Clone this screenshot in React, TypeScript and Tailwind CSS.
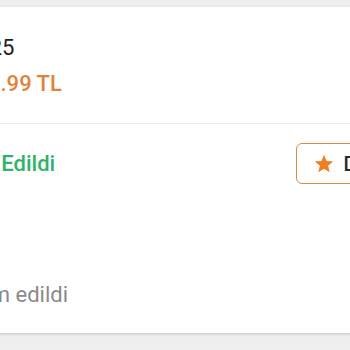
export default function App() {
  return (
    <div className="h-[350px] w-[350px] overflow-hidden bg-[#efefef] pt-[7px] font-['Roboto',sans-serif]">
      <div className="-ml-[100px] w-[620px] bg-white shadow-[0_1px_3px_rgba(0,0,0,0.18)]">
        {/* order summary */}
        <div className="pl-[100px] pt-[25px] pb-[23px]">
          <div className="-ml-[35px] whitespace-nowrap text-[22px] leading-[32px] text-[#212121]">
            2025
          </div>
          <div className="mt-[4px] -ml-[37px] whitespace-nowrap text-[22px] leading-[32px] font-medium text-[#e0823a]">
            149.99 TL
          </div>
        </div>

        <div className="border-t border-[#ececec]" />

        {/* status row */}
        <div className="flex items-center pl-[100px] pt-[19px]">
          <div className="w-[296px] shrink-0">
            <div className="-ml-[70px] whitespace-nowrap text-[22px] leading-[32px] font-medium text-[#2fb36a]">
              Teslim Edildi
            </div>
          </div>
          <button className="flex h-[41px] items-center gap-[9px] rounded-[6px] border-[1.5px] border-[#d98c47] pl-[15.5px] pr-[16px] text-[20px] font-medium text-[#2a2a2a]">
            <svg width="22" height="22" viewBox="0 0 24 24" fill="#f07f22">
              <path d="M12 17.27L18.18 21l-1.64-7.03L22 9.24l-7.19-.61L12 2 9.19 8.63 2 9.24l5.46 4.73L5.82 21z" />
            </svg>
            Değerlendir
          </button>
        </div>

        <div className="pl-[100px] pt-[95px] pb-[22px]">
          <div className="-ml-[55px] whitespace-nowrap text-[22px] leading-[32px] text-[#8a8a8a]">
            Teslim edildi
          </div>
        </div>
      </div>
    </div>
  );
}
